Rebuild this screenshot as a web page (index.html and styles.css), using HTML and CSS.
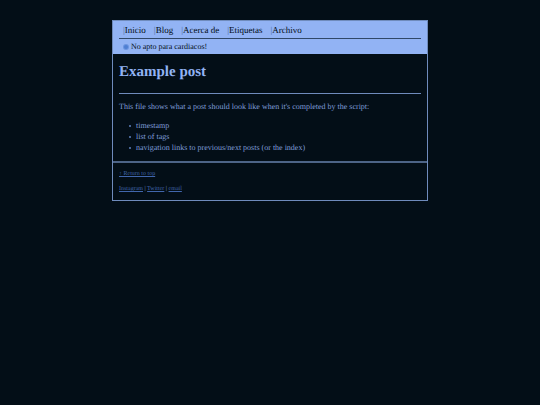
FILE: index.html
```
<!DOCTYPE html>
<html lang="es">
<head>
<meta charset="utf-8">
<meta name="viewport" content="width=device-width, initial-scale=1">
<title>Example post</title>
<link rel="stylesheet" href="styles.css">
</head>
<body>
<div class="page" id="top">
  <header class="header">
    <nav>
      <ul class="nav-list">
        <li><a href="#">Inicio</a></li>
        <li><a href="#">Blog</a></li>
        <li><a href="#">Acerca de</a></li>
        <li><a href="#">Etiquetas</a></li>
        <li><a href="#">Archivo</a></li>
      </ul>
    </nav>
    <p class="tagline"><svg class="dot" viewBox="0 0 6 6" aria-hidden="true"><circle class="dot-halo" cx="3" cy="3" r="3"/><circle class="dot-core" cx="3" cy="3" r="2"/></svg>No apto para cardiacos!</p>
  </header>
  <main class="post">
    <h1>Example post</h1>
    <hr>
    <p>This file shows what a post should look like when it's completed by the script:</p>
    <ul class="features">
      <li>timestamp</li>
      <li>list of tags</li>
      <li>navigation links to previous/next posts (or the index)</li>
    </ul>
  </main>
  <footer class="footer">
    <p><a href="#top">↑ Return to top</a></p>
    <p><a href="#">Instagram</a> | <a href="#">Twitter</a> | <a href="#">email</a></p>
  </footer>
</div>
</body>
</html>
```
FILE: styles.css
```
:root {
  --bg: #030e17;
  --accent: #92b3f4;
  --line: #6f8bbc;
  --text: #7f9dd8;
  --link: #4166ac;
}

* {
  box-sizing: border-box;
}

body {
  margin: 0;
  padding: 20px 112px;
  background: var(--bg);
  color: var(--text);
  font-family: "Liberation Serif", serif;
  font-size: 8px;
  line-height: 11px;
  text-rendering: geometricPrecision;
}

h1, p, ul {
  margin: 0;
  padding: 0;
}

.page {
  border: 1px solid var(--line);
}

.header {
  padding: 3px 6px 2px;
  background: var(--accent);
  color: var(--bg);
}

.nav-list {
  display: flex;
  gap: 8px;
  padding: 0 4px 2px;
  border-bottom: 1px solid #304868;
  list-style: none;
  font-size: 9px;
  line-height: 12px;
}

.nav-list li::before {
  content: "|";
  color: #4b6aa6;
}

.nav-list a {
  color: inherit;
  text-decoration: none;
}

.tagline {
  display: flex;
  align-items: center;
  gap: 2px;
  padding: 2px 4px 0;
}

.dot {
  width: 6px;
  height: 6px;
}

.dot-halo {
  fill: #6c94e0;
}

.dot-core {
  fill: #4f7fd2;
}

.post {
  padding: 8px 6px;
}

h1 {
  color: var(--accent);
  font-size: 15px;
  line-height: 20px;
}

hr {
  height: 1px;
  margin: 11px 0 7px;
  border: 0;
  background: var(--line);
}

.features {
  margin-top: 8px;
  padding-left: 17px;
  list-style: none;
}

.features li {
  position: relative;
}

.features li::before {
  content: "";
  position: absolute;
  top: 5px;
  left: -7px;
  width: 2px;
  height: 2px;
  border-radius: 50%;
  background: #5f80bd;
}

.footer {
  display: grid;
  gap: 4px;
  padding: 6px 6px 5px;
  border-top: 2px solid #4d6487;
  font-size: 6px;
}

.footer a {
  color: var(--link);
}
```
